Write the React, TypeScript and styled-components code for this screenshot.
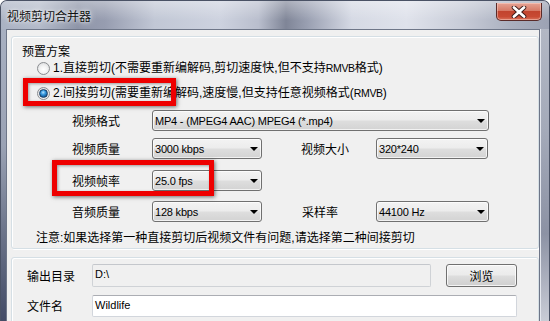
import React from "react";
import styled, { createGlobalStyle } from "styled-components";

const Global = createGlobalStyle`
  html, body { margin: 0; padding: 0; background: #ffffff; }
  body {
    font-family: "Liberation Sans", "Noto Sans CJK SC", sans-serif;
    font-size: 12px;
    color: #000;
  }
  * { box-sizing: border-box; }
`;

const Window = styled.div`
  position: relative;
  width: 550px;
  height: 321px;
  border: 1px solid #4a5265;
  border-bottom: none;
  border-radius: 7px 7px 0 0;
  overflow: hidden;
  display: flex;
  flex-direction: column;
  background: #9ea5b6;
`;

const TitleBar = styled.div`
  height: 28px;
  flex: none;
  display: flex;
  align-items: flex-start;
  padding-left: 6px;
  background:
    linear-gradient(180deg, rgba(255, 255, 255, 0.35) 0%, rgba(255, 255, 255, 0) 70%),
    linear-gradient(90deg, #aab2c3 0%, #b4bbca 7%, #8e95a8 14%, #979db0 19%, #c1c7d5 28%, #cdd2df 40%, #b9becd 47%, #7f8597 52%, #9aa0b2 56%, #d5d9e4 64%, #dfe2eb 74%, #c8ccd8 84%, #aab0bf 93%, #9ca2b3 100%);
`;

const Title = styled.span`
  margin-top: 7px;
  line-height: 16px;
  font-family: "Noto Sans CJK SC", sans-serif;
  font-size: 12px;
  color: #111;
  text-shadow: 0 0 6px rgba(255, 255, 255, 0.9), 0 0 3px rgba(255, 255, 255, 0.8);
`;

const CloseButton = styled.div`
  margin-left: auto;
  margin-top: 2px;
  margin-right: 7px;
  width: 46px;
  height: 18px;
  border: 1px solid #5a2a28;
  border-top: none;
  border-radius: 0 0 5px 5px;
  background: linear-gradient(180deg, #e6a394 0%, #d67a66 45%, #c2442e 50%, #c84a33 80%, #d9735c 100%);
  box-shadow: inset 0 0 0 1px rgba(255, 220, 210, 0.45);
  display: flex;
  align-items: center;
  justify-content: center;
`;

const Body = styled.div`
  flex: 1;
  display: flex;
  min-height: 0;
`;

const LeftFrame = styled.div`
  width: 5px;
  flex: none;
  background: linear-gradient(180deg, #a8b0c1 0%, #9aa2b4 40%, #6b7389 70%, #434b66 100%);
`;

const RightFrame = styled.div`
  width: 9px;
  flex: none;
  background: linear-gradient(180deg, #b2b7c4 0%, #a4aab9 35%, #8c92a4 70%, #c9ccd6 100%);
  border-left: 1px solid #e4e7ee;
`;

const Client = styled.div`
  width: 534px;
  flex: none;
  background: #f0f0f0;
  border: 1px solid #6e7688;
  border-bottom: none;
  padding: 6px 1px 0 4px;
  overflow: hidden;
  display: flex;
  flex-direction: column;
`;

const GroupBox = styled.div<{ $height: number; $top?: number }>`
  flex: none;
  width: 528px;
  height: ${(p) => p.$height}px;
  margin-top: ${(p) => p.$top ?? 0}px;
  border: 1px solid #d5dfe5;
  border-radius: 3px;
  box-shadow: inset 1px 1px 0 #ffffff, 1px 1px 0 #ffffff;
  display: flex;
  flex-direction: column;
`;

const Legend = styled.div`
  margin: 6px 0 0 10px;
  line-height: 16px;
  font-family: "Noto Sans CJK SC", sans-serif;
`;

const RadioRow = styled.div<{ $top: number }>`
  margin: ${(p) => p.$top}px 0 0 25px;
  height: 18px;
  display: flex;
  align-items: center;
  gap: 3px;
  white-space: nowrap;
`;

const RadioCircle = styled.span<{ $checked?: boolean }>`
  width: 13px;
  height: 13px;
  border-radius: 50%;
  border: 1px solid #8b8d90;
  background: radial-gradient(circle at 50% 60%, #ffffff 0%, #f4f4f4 40%, #d4d6d8 100%);
  display: flex;
  align-items: center;
  justify-content: center;
  flex: none;
  &::after {
    content: "";
    display: ${(p) => (p.$checked ? "block" : "none")};
    width: 7px;
    height: 7px;
    border-radius: 50%;
    border: 1px solid #1c3f63;
    background: radial-gradient(circle at 45% 35%, #b6e1ff 0%, #3a9ce0 35%, #0c4f8f 80%);
  }
`;

const RadioText = styled.span`
  line-height: 16px;
  font-size: 12px;
`;

const Small = styled.span`
  font-size: 10.5px;
  letter-spacing: -0.3px;
`;

const FormRow = styled.div<{ $top: number; $height?: number; $left?: number }>`
  margin: ${(p) => p.$top}px 0 0 ${(p) => p.$left ?? 60}px;
  height: ${(p) => p.$height ?? 21}px;
  display: flex;
  align-items: center;
`;

const Label = styled.span<{ $width: number; $gap?: number }>`
  width: ${(p) => p.$width}px;
  margin-left: ${(p) => p.$gap ?? 0}px;
  flex: none;
  font-family: "Noto Sans CJK SC", sans-serif;
  font-size: 12px;
  line-height: 16px;
`;

const Select = styled.div<{ $width: number }>`
  width: ${(p) => p.$width}px;
  height: 21px;
  flex: none;
  border: 1px solid #707070;
  border-radius: 3px;
  background: linear-gradient(180deg, #f3f3f3 0%, #ececec 48%, #dedede 52%, #d3d3d3 100%);
  box-shadow: inset 0 0 0 1px rgba(255, 255, 255, 0.7);
  display: flex;
  align-items: center;
  padding: 0 3px 0 2px;
  font-family: "Liberation Sans", sans-serif;
  font-size: 11px;
  letter-spacing: -0.2px;
  white-space: nowrap;
`;

const SelectValue = styled.span`
  flex: 1;
  overflow: hidden;
`;

const Arrow = styled.span`
  width: 0;
  height: 0;
  border-left: 4px solid transparent;
  border-right: 4px solid transparent;
  border-top: 4px solid #000;
  flex: none;
`;

const Note = styled.div`
  margin: 8px 0 0 24px;
  line-height: 16px;
  white-space: nowrap;
`;

const TextInput = styled.div<{ $width: number; $readOnly?: boolean; $height: number }>`
  width: ${(p) => p.$width}px;
  height: ${(p) => p.$height}px;
  flex: none;
  border: 1px solid ${(p) => (p.$readOnly ? "#cfd2d6" : "#d2d6dc")};
  border-top-color: ${(p) => (p.$readOnly ? "#c4c7cc" : "#abadb3")};
  background: ${(p) => (p.$readOnly ? "#f0f0f0" : "#ffffff")};
  border-radius: 2px;
  padding: 0 0 3px 2px;
  display: flex;
  align-items: center;
  font-family: "Liberation Sans", sans-serif;
  font-size: 11px;
`;

const Button = styled.div`
  margin-left: 15px;
  width: 71px;
  height: 23px;
  flex: none;
  border: 1px solid #707070;
  border-radius: 3px;
  background: linear-gradient(180deg, #f2f2f2 0%, #ebebeb 48%, #dddddd 52%, #cfcfcf 100%);
  box-shadow: inset 0 0 0 1px rgba(255, 255, 255, 0.75);
  display: flex;
  align-items: center;
  justify-content: center;
  font-family: "Noto Sans CJK SC", sans-serif;
  font-size: 12px;
`;

const Highlight = styled.div<{ $x: number; $y: number; $w: number; $h: number }>`
  position: absolute;
  left: ${(p) => p.$x}px;
  top: ${(p) => p.$y}px;
  width: ${(p) => p.$w}px;
  height: ${(p) => p.$h}px;
  border: 5px solid #ee0000;
  box-shadow: 1px 1px 4px rgba(0, 0, 0, 0.55), inset 1px 1px 3px rgba(0, 0, 0, 0.35);
  pointer-events: none;
`;

function Combo({ width, value }: { width: number; value: string }) {
  return (
    <Select $width={width}>
      <SelectValue>{value}</SelectValue>
      <Arrow />
    </Select>
  );
}

export default function App() {
  return (
    <>
      <Global />
      <Window>
        <TitleBar>
          <Title>视频剪切合并器</Title>
          <CloseButton>
            <svg width="16" height="12" viewBox="0 0 16 12">
              <path d="M3 1.5 L13 10.5 M13 1.5 L3 10.5" stroke="#3a1a18" strokeWidth="4.6" strokeLinecap="round" />
              <path d="M3 1.5 L13 10.5 M13 1.5 L3 10.5" stroke="#ffffff" strokeWidth="2.8" strokeLinecap="round" />
            </svg>
          </CloseButton>
        </TitleBar>
        <Body>
          <LeftFrame />
          <Client>
            <GroupBox $height={213}>
              <Legend>预置方案</Legend>
              <RadioRow $top={0}>
                <RadioCircle />
                <RadioText>1.直接剪切(不需要重新编解码,剪切速度快,但不支持<Small>RMVB</Small>格式)</RadioText>
              </RadioRow>
              <RadioRow $top={7}>
                <RadioCircle $checked />
                <RadioText>2.间接剪切(需要重新编解码,速度慢,但支持任意视频格式(<Small>RMVB</Small>)</RadioText>
              </RadioRow>
              <FormRow $top={8}>
                <Label $width={80}>视频格式</Label>
                <Combo width={337} value="MP4 - (MPEG4 AAC) MPEG4 (*.mp4)" />
              </FormRow>
              <FormRow $top={7}>
                <Label $width={80}>视频质量</Label>
                <Combo width={110} value="3000 kbps" />
                <Label $width={75} $gap={39}>视频大小</Label>
                <Combo width={112} value="320*240" />
              </FormRow>
              <FormRow $top={11}>
                <Label $width={80}>视频帧率</Label>
                <Combo width={110} value="25.0 fps" />
              </FormRow>
              <FormRow $top={10}>
                <Label $width={80}>音频质量</Label>
                <Combo width={110} value="128 kbps" />
                <Label $width={74} $gap={40}>采样率</Label>
                <Combo width={113} value="44100 Hz" />
              </FormRow>
              <Note>注意:如果选择第一种直接剪切后视频文件有问题,请选择第二种间接剪切</Note>
            </GroupBox>
            <GroupBox $height={80} $top={8}>
              <FormRow $top={6} $left={15} $height={23}>
                <Label $width={65}>输出目录</Label>
                <TextInput $width={339} $height={23} $readOnly>D:\</TextInput>
                <Button>浏览</Button>
              </FormRow>
              <FormRow $top={8} $left={15} $height={22}>
                <Label $width={65}>文件名</Label>
                <TextInput $width={425} $height={22}>Wildlife</TextInput>
              </FormRow>
            </GroupBox>
          </Client>
          <RightFrame />
        </Body>
        <Highlight $x={22} $y={77} $w={153} $h={28} />
        <Highlight $x={51} $y={159} $w={162} $h={36} />
      </Window>
    </>
  );
}
